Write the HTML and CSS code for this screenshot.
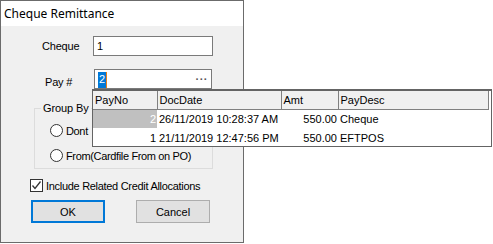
FILE: index.html
```html
<!DOCTYPE html>
<html lang="en">
<head>
    <meta charset="UTF-8">
    <title>Cheque Remittance</title>
    <link rel="stylesheet" href="styles.css">
</head>
<body>
<div id="app">
    <div class="dialog">
        <div class="titlebar">Cheque Remittance</div>
        <div class="dialog-body">
            <div class="field-row">
                <label class="field-label">Cheque</label>
                <div class="input">1</div>
            </div>
            <div class="field-row field-row-pay">
                <label class="field-label label-pay">Pay #</label>
                <div class="input input-lookup">
                    <span class="sel">2</span>
                    <span class="dots">&middot;&middot;&middot;</span>
                </div>
            </div>
            <fieldset class="group">
                <legend>Group By</legend>
                <label class="radio-row"><span class="radio"></span>Dont</label>
                <label class="radio-row"><span class="radio"></span>From(Cardfile From on PO)</label>
            </fieldset>
            <label class="check-row">
                <span class="check">
                    <svg width="11" height="11" viewBox="0 0 11 11"><path d="M1.5 5.5 L4 8.5 L9.5 1.5" fill="none" stroke="#333" stroke-width="1.3"/></svg>
                </span>
                Include Related Credit Allocations
            </label>
            <div class="buttons">
                <button class="btn btn-default">OK</button>
                <button class="btn">Cancel</button>
            </div>
        </div>
    </div>

    <div class="lookup">
        <table>
            <thead>
            <tr>
                <th class="col-no">PayNo</th>
                <th class="col-date">DocDate</th>
                <th class="col-amt">Amt</th>
                <th class="col-desc">PayDesc</th>
            </tr>
            </thead>
            <tbody>
            <tr>
                <td class="num selected">2</td>
                <td>26/11/2019 10:28:37 AM</td>
                <td class="num">550.00</td>
                <td>Cheque</td>
            </tr>
            <tr>
                <td class="num">1</td>
                <td>21/11/2019 12:47:56 PM</td>
                <td class="num">550.00</td>
                <td>EFTPOS</td>
            </tr>
            </tbody>
        </table>
    </div>
</div>
</body>
</html>
```

FILE: styles.css
```css
* {
    box-sizing: border-box;
    margin: 0;
    padding: 0;
}

body {
    background: #fff;
    font-family: "Liberation Sans", Arial, sans-serif;
    font-size: 11px;
    color: #000;
}

#app {
    position: relative;
    width: 493px;
    height: 244px;
}

.dialog {
    width: 244px;
    height: 243px;
    border: 1px solid #6b6b6b;
    background: #f0f0f0;
}

.titlebar {
    height: 25px;
    background: #fff;
    padding: 5px 0 0 3px;
    font-family: "Noto Sans", sans-serif;
    font-size: 12px;
    line-height: 15px;
}

.dialog-body {
    padding: 10px 0 0 0;
}

.field-row {
    display: flex;
    align-items: center;
    height: 20px;
}

.field-row-pay {
    margin-top: 13px;
}

.field-label {
    width: 92px;
    padding-left: 41px;
    letter-spacing: -0.2px;
}

.label-pay {
    padding-left: 44px;
    padding-top: 5px;
}

.input {
    width: 120px;
    height: 20px;
    border: 1px solid #7a7a7a;
    background: #fff;
    padding: 2px 0 0 3px;
    line-height: 14px;
}

.input-lookup {
    display: flex;
    justify-content: space-between;
    width: 118px;
    margin-left: 1px;
}

.sel {
    background: #0078d7;
    color: #fff;
    padding: 0 1px;
    border-right: 1px solid #e87d1a;
}

.dots {
    color: #555;
    font-weight: bold;
    letter-spacing: 0.5px;
    padding-right: 3px;
}

.group {
    margin: 13px 0 0 33px;
    width: 179px;
    height: 67px;
    border: 1px solid #dcdcdc;
    padding: 0;
}

.group legend {
    margin-left: 6px;
    padding: 0 2px;
    font-size: 11px;
    letter-spacing: -0.1px;
}

.radio-row {
    display: flex;
    align-items: center;
    gap: 3px;
    height: 13px;
    margin: 10px 0 0 15px;
    letter-spacing: -0.35px;
}

.radio-row + .radio-row {
    margin-top: 12px;
}

.radio {
    width: 13px;
    height: 13px;
    border: 1px solid #333;
    border-radius: 50%;
    background: #fff;
}

.check-row {
    display: flex;
    align-items: center;
    gap: 3px;
    margin: 10px 0 0 29px;
    height: 13px;
    letter-spacing: -0.3px;
}

.check {
    display: flex;
    align-items: center;
    justify-content: center;
    width: 13px;
    height: 13px;
    border: 1px solid #333;
    background: #fff;
}

.buttons {
    display: flex;
    gap: 31px;
    margin: 8px 0 0 30px;
}

.btn {
    width: 74px;
    height: 23px;
    border: 1px solid #adadad;
    background: #e1e1e1;
    font-family: "Liberation Sans", Arial, sans-serif;
    font-size: 11px;
}

.btn-default {
    border: 2px solid #0078d7;
}

.lookup {
    position: absolute;
    left: 92px;
    top: 89px;
    width: 400px;
    height: 58px;
    border: 1px solid #646464;
    border-top-width: 2px;
    background: #fff;
    font-family: "Liberation Sans", Tahoma, sans-serif;
}

.lookup table {
    border-collapse: collapse;
    table-layout: fixed;
    width: 395px;
}

.lookup th {
    height: 18px;
    background: #f0f0f0;
    border-right: 1px solid #808080;
    border-bottom: 1px solid #808080;
    font-weight: normal;
    text-align: left;
    padding: 0 2px;
}

.lookup td {
    height: 19px;
    padding: 0 2px;
    white-space: nowrap;
}

.col-no { width: 64px; }
.col-date { width: 124px; }
.col-amt { width: 57px; }
.col-desc { width: 150px; }

.lookup td.num {
    text-align: right;
    padding-right: 1px;
}

.lookup td.selected {
    background: #c0c0c0;
    color: #fff;
}
```
